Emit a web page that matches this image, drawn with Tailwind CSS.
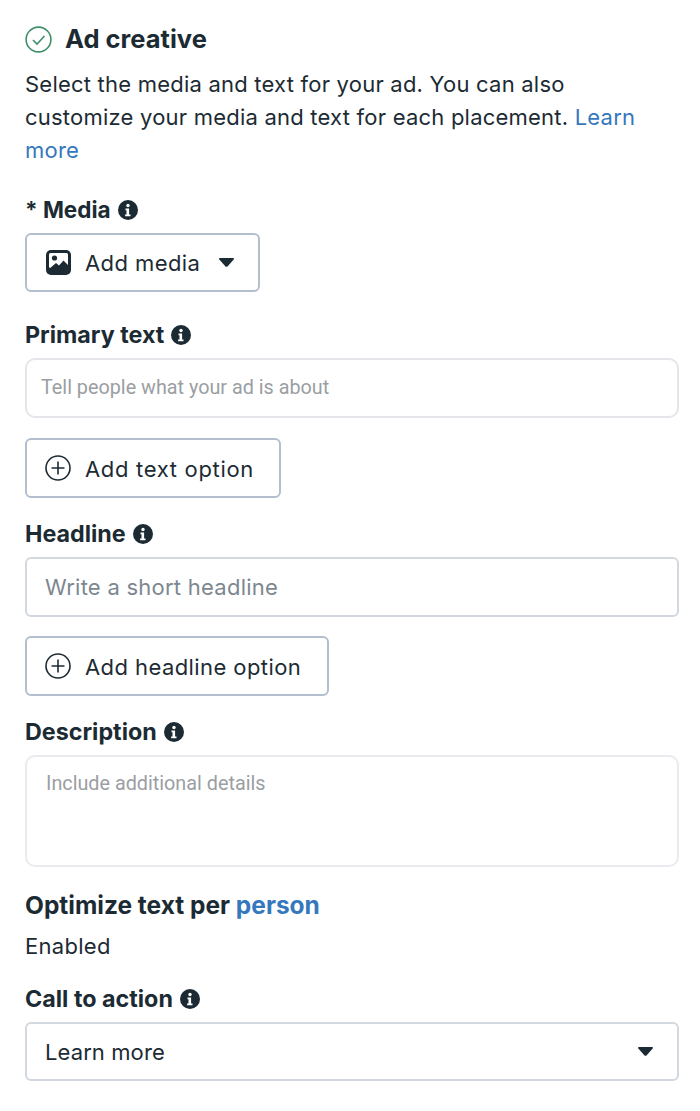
<!doctype html>
<html><head><meta charset="utf-8">
<script src="https://cdn.jsdelivr.net/npm/@tailwindcss/browser@4"></script>
</head>
<body class="bg-white">
<main class="w-[700px] h-[1111px] overflow-hidden pl-[25px] pr-[21px] pt-[22px] font-['Inter',sans-serif] text-[#1c2b33] flex flex-col">
  <div class="flex items-center gap-[13px] h-[34px]">
    <svg class="w-[27px] h-[27px] shrink-0" viewBox="0 0 27 27" fill="none" stroke="#3f8f6b"><circle cx="13.500" cy="13.500" r="12.400" stroke-width="1.600"/><path d="M8 14l4 4 7.500-8" stroke-width="1.600"/></svg>
    <h1 class="text-[25.500px] font-bold leading-[34px]">Ad creative</h1>
  </div>
  <p class="mt-[12px] w-[625px] text-[22px] leading-[33px] tracking-[0.22px]">Select the media and text for your ad. You can also customize your media and text for each placement. <a class="text-[#3578bd]">Learn</a> <a class="text-[#3578bd]">more</a></p>

  <div class="mt-[28px] flex items-center gap-[7px] h-[30px] text-[22.500px] font-bold"><span>* Media</span><svg class="w-[20px] h-[20px]" viewBox="0 0 20 20"><circle cx="10" cy="10" r="10" fill="#1c2b33"/><circle cx="10" cy="5.500" r="1.700" fill="#fff"/><path d="M7.500 8.600h3.600v6h1.400v1.600H7.100v-1.600h1.400v-4.400H7.500z" fill="#fff"/></svg></div>
  <button class="mt-[8px] w-[235px] h-[59px] flex items-center border-2 border-[#b4bfcd] rounded-[6px] pl-[19px] text-[22px] tracking-[0.42px]">
    <svg class="w-[25px] h-[25px] shrink-0" viewBox="0 0 25 25"><rect width="25" height="25" rx="5" fill="#1c2b33"/><rect x="3" y="3" width="19" height="15" rx="1.500" fill="#fff"/><circle cx="8.500" cy="8" r="2.600" fill="#1c2b33"/><path d="M3 19l7-6 3 2.500 4.500-5 4.500 4.500V20H3z" fill="#1c2b33"/></svg>
    <span class="ml-[14px] pt-[2px]">Add media</span>
    <svg class="w-[15px] h-[9px] ml-[19px]" viewBox="0 0 15 9"><path d="M1 0h13c1 0 1.300 1 .7 1.600L8.500 8.400c-.5.500-1.500.500-2 0L.3 1.600C-.3 1 0 0 1 0z" fill="#1c2b33"/></svg>
  </button>

  <div class="mt-[28px] flex items-center gap-[7px] h-[30px] text-[23.300px] font-bold"><span>Primary text</span><svg class="w-[20px] h-[20px]" viewBox="0 0 20 20"><circle cx="10" cy="10" r="10" fill="#1c2b33"/><circle cx="10" cy="5.500" r="1.700" fill="#fff"/><path d="M7.500 8.600h3.600v6h1.400v1.600H7.100v-1.600h1.400v-4.400H7.500z" fill="#fff"/></svg></div>
  <div class="mt-[8px] w-[654px] h-[60px] flex items-center border-2 border-[#e4e6ea] rounded-[10px] pl-[14px] text-[19.800px] text-[#9a9ea3] font-['Roboto',sans-serif]">Tell people what your ad is about</div>
  <button class="mt-[20px] w-[256px] h-[60px] flex items-center border-2 border-[#b4bfcd] rounded-[6px] pl-[18px] text-[22px] tracking-[0.68px]">
    <svg class="w-[26px] h-[26px] shrink-0" viewBox="0 0 26 26" fill="none" stroke="#1c2b33" stroke-width="1.600"><circle cx="13" cy="13" r="12"/><path d="M13 6.500v13M6.500 13h13"/></svg>
    <span class="ml-[14px] pt-[2px]">Add text option</span>
  </button>

  <div class="mt-[21px] flex items-center gap-[7px] h-[30px] text-[23.300px] font-bold"><span>Headline</span><svg class="w-[20px] h-[20px]" viewBox="0 0 20 20"><circle cx="10" cy="10" r="10" fill="#1c2b33"/><circle cx="10" cy="5.500" r="1.700" fill="#fff"/><path d="M7.500 8.600h3.600v6h1.400v1.600H7.100v-1.600h1.400v-4.400H7.500z" fill="#fff"/></svg></div>
  <div class="mt-[8px] w-[654px] h-[60px] flex items-center border-2 border-[#d3d8e0] rounded-[6px] pl-[18px] text-[22px] tracking-[0.25px] text-[#7d8790]">Write a short headline</div>
  <button class="mt-[19px] w-[304px] h-[60px] flex items-center border-2 border-[#b4bfcd] rounded-[6px] pl-[18px] text-[22px] tracking-[0.42px]">
    <svg class="w-[26px] h-[26px] shrink-0" viewBox="0 0 26 26" fill="none" stroke="#1c2b33" stroke-width="1.600"><circle cx="13" cy="13" r="12"/><path d="M13 6.500v13M6.500 13h13"/></svg>
    <span class="ml-[14px] pt-[2px]">Add headline option</span>
  </button>

  <div class="mt-[21px] flex items-center gap-[7px] h-[30px] text-[23.300px] font-bold"><span>Description</span><svg class="w-[20px] h-[20px]" viewBox="0 0 20 20"><circle cx="10" cy="10" r="10" fill="#1c2b33"/><circle cx="10" cy="5.500" r="1.700" fill="#fff"/><path d="M7.500 8.600h3.600v6h1.400v1.600H7.100v-1.600h1.400v-4.400H7.500z" fill="#fff"/></svg></div>
  <div class="mt-[8px] w-[654px] h-[112px] border-2 border-[#e9ebee] rounded-[10px] pl-[19px] pt-[14px] text-[19.800px] leading-[26px] text-[#9a9ea3] font-['Roboto',sans-serif]">Include additional details</div>

  <div class="mt-[23px] h-[30px] flex items-center text-[24.500px] font-bold"><span>Optimize text per&nbsp;<span class="text-[#3578bd]">person</span></span></div>
  <div class="mt-[11px] h-[30px] flex items-center text-[22px] tracking-[0.3px]">Enabled</div>

  <div class="mt-[23px] flex items-center gap-[7px] h-[30px] text-[23.300px] font-bold"><span>Call to action</span><svg class="w-[20px] h-[20px]" viewBox="0 0 20 20"><circle cx="10" cy="10" r="10" fill="#1c2b33"/><circle cx="10" cy="5.500" r="1.700" fill="#fff"/><path d="M7.500 8.600h3.600v6h1.400v1.600H7.100v-1.600h1.400v-4.400H7.500z" fill="#fff"/></svg></div>
  <div class="mt-[8px] w-[654px] h-[59px] flex items-center justify-between border-2 border-[#d3d8e0] rounded-[6px] pl-[18px] pr-[24px] text-[22px] tracking-[0.1px]">
    <span class="pt-[2px]">Learn more</span>
    <svg class="w-[15px] h-[9px]" viewBox="0 0 15 9"><path d="M1 0h13c1 0 1.300 1 .7 1.600L8.500 8.400c-.5.500-1.500.500-2 0L.3 1.600C-.3 1 0 0 1 0z" fill="#1c2b33"/></svg>
  </div>
</main>
</body></html>
